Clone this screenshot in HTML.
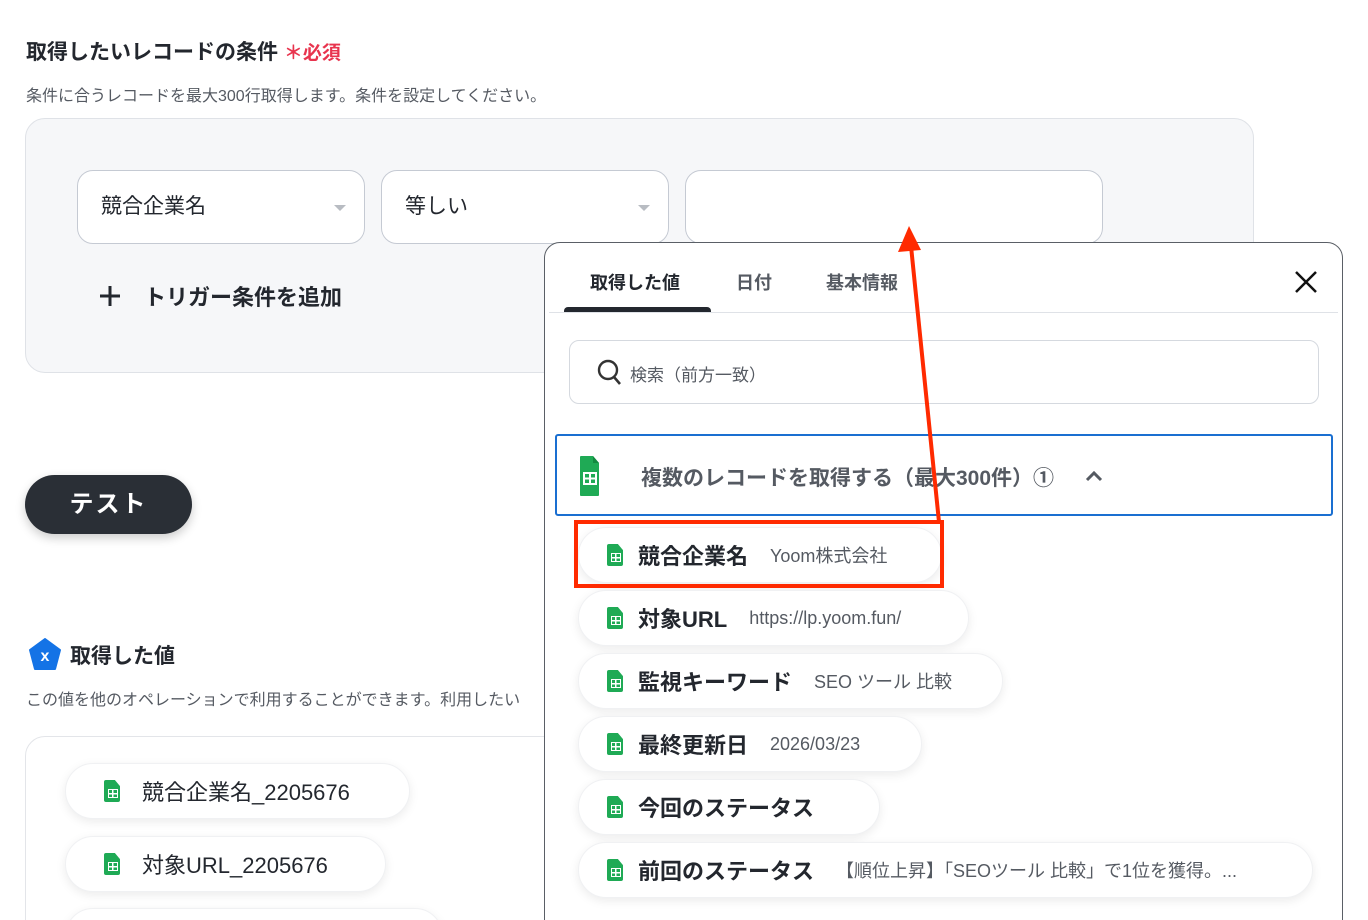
<!DOCTYPE html>
<html><head><meta charset="utf-8"><style>
*{box-sizing:border-box;margin:0;padding:0}
html{width:1368px;height:920px;overflow:hidden}
body{width:1368px;height:920px;overflow:hidden;background:#fff;font-family:"Liberation Sans","Noto Sans CJK JP",sans-serif;color:#23272e;position:relative}
.abs{position:absolute}
.sel{position:absolute;top:170px;height:74px;border:1px solid #c5cad3;border-radius:16px;background:#fff;font-size:21px;padding-left:23px;line-height:72px}
.tri{position:absolute;right:18px;top:34px;width:0;height:0;border-left:6px solid transparent;border-right:6px solid transparent;border-top:6px solid #b8bcc2}
.chip{position:absolute;height:56px;border-radius:28px;background:#fff;box-shadow:0 3px 10px rgba(0,0,0,.08);border:1px solid #f0f1f3;display:flex;align-items:center;padding-left:28px;font-size:22px;white-space:nowrap}
.chip b{font-weight:bold;margin-left:15px}
.chip span{font-size:18px;color:#555a62;margin-left:22px}
.gs{display:inline-block;width:16px;height:22px;background:#1faa55;border-radius:2px;position:relative;clip-path:polygon(0 0,68% 0,100% 28%,100% 100%,0 100%)}
.gs:after{content:"";position:absolute;left:4px;top:9px;width:8px;height:7px;border:1.5px solid #fff;background:linear-gradient(#fff,#fff) 50% 0/1.5px 100% no-repeat,linear-gradient(#fff,#fff) 0 50%/100% 1.5px no-repeat}
</style></head><body>
<div class="abs" style="left:26px;top:36px;font-size:21px;font-weight:bold">取得したいレコードの条件 <span style="color:#e8344e;font-size:19px">＊必須</span></div>
<div class="abs" style="left:26px;top:82px;font-size:16px;color:#555a62">条件に合うレコードを最大300行取得します。条件を設定してください。</div>
<div class="abs" style="left:25px;top:118px;width:1229px;height:255px;background:#f6f7f9;border:1px solid #dfe2e7;border-radius:20px"></div>
<div class="sel" style="left:77px;width:288px">競合企業名<div class="tri"></div></div>
<div class="sel" style="left:381px;width:288px">等しい<div class="tri"></div></div>
<div class="sel" style="left:685px;width:418px"></div>
<svg class="abs" style="left:98px;top:284px" width="24" height="24"><path d="M12 2V22M2 12H22" stroke="#23272e" stroke-width="3"/></svg>
<div class="abs" style="left:144px;top:280px;font-size:22px;font-weight:bold">トリガー条件を追加</div>
<div class="abs" style="left:25px;top:475px;width:167px;height:59px;border-radius:30px;background:#2a2f36;color:#fff;font-size:24px;font-weight:bold;text-align:center;line-height:59px;box-shadow:0 4px 10px rgba(0,0,0,.2);letter-spacing:2px">テスト</div>
<svg class="abs" style="left:28px;top:638px" width="34" height="34" viewBox="0 0 34 34"><path d="M17 1 L32 12 L27 31 L7 31 L2 12 Z" fill="#1473e6" stroke="#1473e6" stroke-width="2" stroke-linejoin="round"/><text x="17" y="23" font-size="16" font-weight="bold" fill="#fff" text-anchor="middle" font-family="Liberation Sans">x</text></svg>
<div class="abs" style="left:70px;top:640px;font-size:21px;font-weight:bold">取得した値</div>
<div class="abs" style="left:26px;top:686px;font-size:16px;color:#555a62;white-space:nowrap">この値を他のオペレーションで利用することができます。利用したい</div>
<div class="abs" style="left:25px;top:736px;width:600px;height:220px;border:1px solid #e3e5e9;border-radius:20px;background:#fff"></div>
<div class="chip" style="left:65px;top:763px;width:345px;padding-left:38px"><i class="gs"></i><b style="font-weight:normal;margin-left:22px">競合企業名_2205676</b></div>
<div class="chip" style="left:65px;top:836px;width:321px;padding-left:38px"><i class="gs"></i><b style="font-weight:normal;margin-left:22px">対象URL_2205676</b></div>
<div class="chip" style="left:65px;top:908px;width:378px"></div>

<div class="abs" style="left:544px;top:242px;width:799px;height:700px;background:#fff;border:1px solid #5a5f66;border-radius:16px">
 <div class="abs" style="left:45px;top:26px;font-size:18px;font-weight:bold">取得した値</div>
 <div class="abs" style="left:191px;top:26px;font-size:18px;color:#555a62;font-weight:bold">日付</div>
 <div class="abs" style="left:281px;top:26px;font-size:18px;color:#555a62;font-weight:bold">基本情報</div>
 <div class="abs" style="left:19px;top:64px;width:147px;height:6px;background:#23272e;border-radius:4px 4px 0 0"></div>
 <div class="abs" style="left:4px;top:69px;width:789px;height:1px;background:#dfe2e7"></div>
 <svg class="abs" style="left:749px;top:27px" width="24" height="24"><path d="M2 2L22 22M22 2L2 22" stroke="#111" stroke-width="2.5"/></svg>
 <div class="abs" style="left:24px;top:97px;width:750px;height:64px;border:1px solid #d5d9df;border-radius:10px"></div>
 <svg class="abs" style="left:52px;top:116px" width="26" height="28"><circle cx="11" cy="11" r="9" fill="none" stroke="#333" stroke-width="2.4"/><path d="M17 18L23 25" stroke="#333" stroke-width="2.6"/></svg>
 <div class="abs" style="left:85px;top:118px;font-size:17px;color:#555a62">検索（前方一致）</div>
 <div class="abs" style="left:10px;top:191px;width:778px;height:82px;border:2px solid #1a6fd1;border-radius:3px"></div>
 <svg class="abs" style="left:35px;top:213px" width="20" height="40" viewBox="0 0 20 40"><path d="M1 0H13L19 7V39Q19 40 18 40H1Q0 40 0 39V1Q0 0 1 0Z" fill="#1faa55"/><path d="M13 0V7H19Z" fill="#138a40"/><rect x="4" y="17" width="12" height="11" fill="none" stroke="#fff" stroke-width="2"/><path d="M10 17V28M4 22.5H16" stroke="#fff" stroke-width="2"/></svg>
 <div class="abs" style="left:96px;top:219px;font-size:21px;font-weight:bold;color:#555a62">複数のレコードを取得する（最大300件）①</div>
 <svg class="abs" style="left:540px;top:226px" width="18" height="14"><path d="M2 11L9 4L16 11" fill="none" stroke="#555a62" stroke-width="3"/></svg>
</div>
<div class="chip" style="left:578px;top:527px;width:364px"><i class="gs"></i><b>競合企業名</b><span>Yoom株式会社</span></div>
<div class="chip" style="left:578px;top:590px;width:391px"><i class="gs"></i><b>対象URL</b><span>https://lp.yoom.fun/</span></div>
<div class="chip" style="left:578px;top:653px;width:425px"><i class="gs"></i><b>監視キーワード</b><span>SEO ツール 比較</span></div>
<div class="chip" style="left:578px;top:716px;width:344px"><i class="gs"></i><b>最終更新日</b><span>2026/03/23</span></div>
<div class="chip" style="left:578px;top:779px;width:302px"><i class="gs"></i><b>今回のステータス</b></div>
<div class="chip" style="left:578px;top:842px;width:735px"><i class="gs"></i><b>前回のステータス</b><span>【順位上昇】「SEOツール 比較」で1位を獲得。...</span></div>
<div class="abs" style="left:574px;top:520px;width:370px;height:68px;border:4px solid #ff2a00"></div>
<svg class="abs" style="left:0;top:0" width="1368" height="920"><path d="M939 522L911 246" stroke="#ff2a00" stroke-width="4"/><path d="M909 226L898 252L921 250Z" fill="#ff2a00"/></svg>
</body></html>
